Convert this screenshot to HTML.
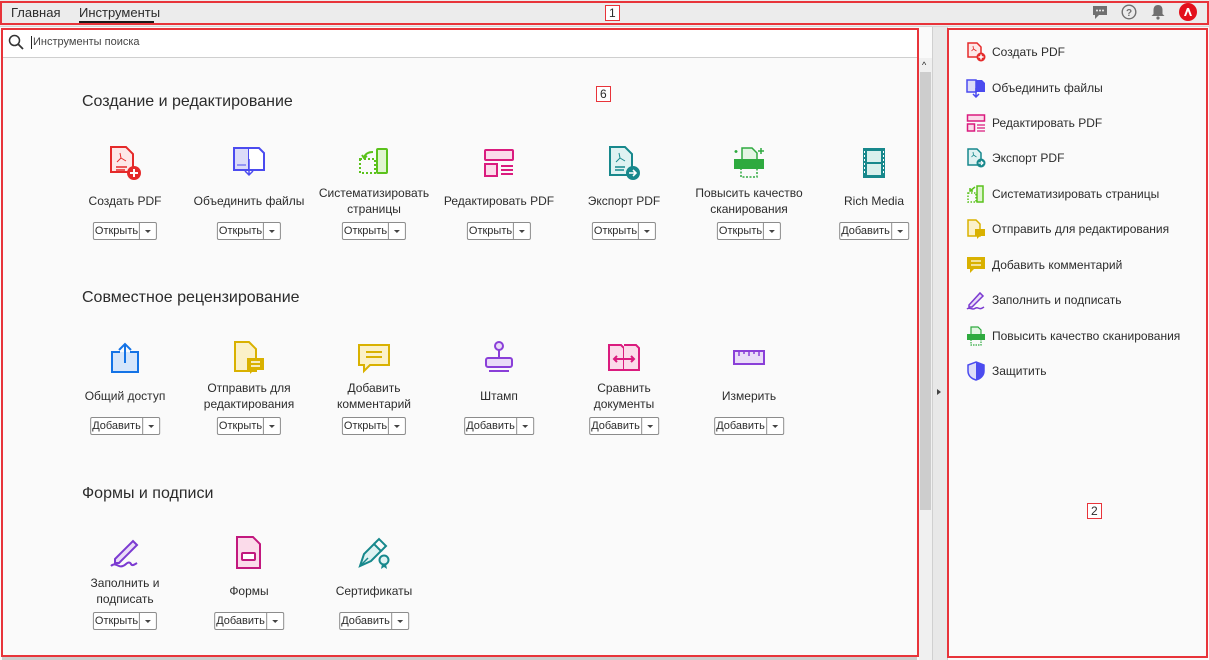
<!DOCTYPE html>
<html><head><meta charset="utf-8"><style>
*{margin:0;padding:0;box-sizing:border-box}
body{width:1209px;height:660px;background:#fafafa;font-family:"Liberation Sans","Noto Sans CJK SC",sans-serif;color:#2c2c2c;position:relative;overflow:hidden}
.abs{position:absolute}
.top{left:0;top:0;width:1209px;height:27px;background:#ececec;border-bottom:1px solid #d6d6d6}
.redbox{position:absolute;border:2px solid #e8343a}
.tab{position:absolute;top:5px;font-size:13px;color:#2c2c2c}
.h{position:absolute;left:82px;font-size:16px;color:#2c2c2c}
.t{position:absolute;width:124px;height:100px}
.t svg{position:absolute;left:44px;top:0}
.t .l{position:absolute;top:39px;left:6px;width:112px;height:34px;display:flex;align-items:center;justify-content:center;text-align:center;font-size:12px;line-height:16px}
.t .b{position:absolute;top:77px;left:50%;transform:translateX(-50%);display:flex;height:18px;border:1px solid #8c8c8c;border-radius:2px;background:#fff;font-size:11px;line-height:16px}
.b span{padding:0 1px}
.b i{width:17px;border-left:1px solid #8c8c8c;position:relative}
.b i:after{content:"";position:absolute;left:5px;top:7px;border:3px solid transparent;border-top:3px solid #444;border-bottom:0}
.r{position:absolute;left:966px;height:20px;font-size:12px;display:flex;align-items:center}
.r svg{margin-right:6px}
.lab{position:absolute;border:1px solid #e8343a;background:#fff;font-size:12px;padding:0 3px;line-height:14px}
</style></head><body>
<div class="abs top"></div>
<div class="tab" style="left:11px">Главная</div>
<div class="tab" style="left:79px">Инструменты</div>
<div class="abs" style="left:79px;top:21px;width:75px;height:2px;background:#1a1a1a"></div>
<svg class="abs" style="left:1092px;top:5px" width="16" height="15" viewBox="0 0 16 15"><path d="M1 1h14v9H7l-4 4v-4H1z" fill="#707070"/><circle cx="5" cy="5.5" r="1" fill="#ececec"/><circle cx="8" cy="5.5" r="1" fill="#ececec"/><circle cx="11" cy="5.5" r="1" fill="#ececec"/></svg>
<svg class="abs" style="left:1121px;top:4px" width="16" height="16" viewBox="0 0 16 16"><circle cx="8" cy="8" r="6.8" fill="none" stroke="#707070" stroke-width="1.4"/><text x="8" y="12" font-size="10" text-anchor="middle" fill="#707070" font-family="Liberation Sans" font-weight="bold">?</text></svg>
<svg class="abs" style="left:1151px;top:4px" width="14" height="16" viewBox="0 0 14 16"><path d="M7 1c3 0 4.5 2 4.5 5v4l2 2H.5l2-2V6C2.5 3 4 1 7 1z" fill="#707070"/><circle cx="7" cy="14" r="1.6" fill="#707070"/></svg>
<svg class="abs" style="left:1179px;top:3px" width="18" height="18" viewBox="0 0 18 18"><circle cx="9" cy="9" r="9" fill="#e3101b"/><path d="M5 13L8 5h2l3 8h-2l-2-5-2 5z" fill="#fff"/></svg>
<div class="redbox" style="left:0;top:1px;width:1209px;height:24px"></div>
<div class="lab" style="left:605px;top:5px">1</div>

<div class="abs" style="left:2px;top:28px;width:916px;height:30px;background:#fff;border-bottom:1px solid #cfcfcf"></div>
<svg class="abs" style="left:8px;top:34px" width="16" height="16" viewBox="0 0 16 16"><circle cx="6.5" cy="6.5" r="5" fill="none" stroke="#333" stroke-width="1.5"/><path d="M10 10l5 5" stroke="#333" stroke-width="1.8"/></svg>
<div class="abs" style="left:31px;top:36px;width:1px;height:13px;background:#222"></div>
<div class="abs" style="left:33px;top:36px;font-size:11px;color:#444">Инструменты поиска</div>
<div class="abs" style="left:919px;top:58px;width:13px;height:602px;background:#f0f0f0"></div>
<div class="abs" style="left:920px;top:72px;width:11px;height:438px;background:#cdcdcd"></div>
<div class="abs" style="left:922px;top:60px;font-size:9px;color:#222">^</div>
<div class="abs" style="left:932px;top:27px;width:16px;height:633px;background:#e8e8e8;border-left:1px solid #d0d0d0;border-right:1px solid #d0d0d0"></div>
<div class="abs" style="left:937px;top:389px;border:3px solid transparent;border-left:4px solid #444"></div>
<div class="abs" style="left:2px;top:657px;width:915px;height:3px;background:#ccc"></div>

<div class="h" style="top:93px">Создание и редактирование</div>
<div class="h" style="top:289px">Совместное рецензирование</div>
<div class="h" style="top:485px">Формы и подписи</div>
<div class="lab" style="left:596px;top:86px">6</div>

<div class="t" style="left:63px;top:145px"><svg width="36" height="36" viewBox="0 0 36 36"><path d="M4 2h15l7 7v18H4z" fill="#fde8e8" stroke="#e52a2a" stroke-width="2"/><path d="M9 22h11M9 25h9" stroke="#e52a2a" stroke-width="1.5"/><path d="M13 8l1 5-4 4M14 13l5 3" stroke="#e52a2a" fill="none"/><circle cx="27" cy="28" r="7" fill="#e52a2a"/><path d="M27 24v8M23 28h8" stroke="#fff" stroke-width="2"/></svg><div class="l">Создать PDF</div><div class="b"><span>Открыть</span><i></i></div></div>
<div class="t" style="left:187px;top:145px"><svg width="36" height="36" viewBox="0 0 36 36"><rect x="3" y="3" width="15" height="22" fill="#dcdcf8" stroke="#4b4bef" stroke-width="2"/><path d="M18 3h10l5 5v17H18" fill="#fff" stroke="#4b4bef" stroke-width="2"/><path d="M18 14v16M14 26l4 4 4-4" stroke="#4b4bef" stroke-width="1.5" fill="none"/><path d="M6 20h9" stroke="#4b4bef"/></svg><div class="l">Объединить файлы</div><div class="b"><span>Открыть</span><i></i></div></div>
<div class="t" style="left:312px;top:145px"><svg width="36" height="36" viewBox="0 0 36 36"><rect x="21" y="4" width="10" height="24" rx="1" fill="#e0f5d0" stroke="#5bc21c" stroke-width="2"/><rect x="4" y="14" width="15" height="14" fill="none" stroke="#5bc21c" stroke-width="2" stroke-dasharray="2 2"/><path d="M17 7c-5 0-8 2-9 6M6 10l2 3 3-2" stroke="#5bc21c" stroke-width="2" fill="none"/></svg><div class="l">Систематизировать страницы</div><div class="b"><span>Открыть</span><i></i></div></div>
<div class="t" style="left:437px;top:145px"><svg width="36" height="36" viewBox="0 0 36 36"><rect x="4" y="5" width="28" height="10" rx="1" fill="#fbdbea" stroke="#da1b7e" stroke-width="2"/><rect x="4" y="19" width="12" height="12" fill="#fbdbea" stroke="#da1b7e" stroke-width="2"/><path d="M20 21h12M20 25h12M20 29h12" stroke="#da1b7e" stroke-width="2"/></svg><div class="l">Редактировать PDF</div><div class="b"><span>Открыть</span><i></i></div></div>
<div class="t" style="left:562px;top:145px"><svg width="36" height="36" viewBox="0 0 36 36"><path d="M4 2h15l7 7v21H4z" fill="#dff2f2" stroke="#17888c" stroke-width="2"/><path d="M9 22h10M9 25h9" stroke="#17888c" stroke-width="1.5"/><path d="M13 8l1 5-4 4M14 13l5 3" stroke="#17888c" fill="none"/><circle cx="27" cy="28" r="7" fill="#17888c"/><path d="M23 28h7M27 25l3 3-3 3" stroke="#fff" stroke-width="1.6" fill="none"/></svg><div class="l">Экспорт PDF</div><div class="b"><span>Открыть</span><i></i></div></div>
<div class="t" style="left:687px;top:145px"><svg width="36" height="36" viewBox="0 0 36 36"><path d="M11 3h10l5 5v10H11z" fill="#e3f5e3" stroke="#2eaa3f" stroke-width="1.5"/><rect x="3" y="14" width="30" height="10" fill="#2eaa3f"/><rect x="10" y="22" width="16" height="10" fill="none" stroke="#2eaa3f" stroke-width="1.5" stroke-dasharray="2 1.5"/><path d="M30 3v6M27 6h6M5 5v3M3.5 6.5h3" stroke="#2eaa3f" stroke-width="1.5"/></svg><div class="l">Повысить качество сканирования</div><div class="b"><span>Открыть</span><i></i></div></div>
<div class="t" style="left:812px;top:145px"><svg width="36" height="36" viewBox="0 0 36 36"><rect x="7" y="3" width="22" height="30" fill="#17888c"/><rect x="11" y="6" width="14" height="11" fill="#d9f0ed"/><rect x="11" y="19" width="14" height="11" fill="#d9f0ed"/><path d="M8.5 6v24M27.5 6v24" stroke="#fff" stroke-dasharray="2 2"/></svg><div class="l">Rich Media</div><div class="b"><span>Добавить</span><i></i></div></div>

<div class="t" style="left:63px;top:340px"><svg width="36" height="36" viewBox="0 0 36 36"><path d="M13 12H5v20h26V12h-8" fill="#d6e6fb" stroke="#1473e6" stroke-width="2"/><path d="M18 23V4M12 10l6-6 6 6" stroke="#1473e6" stroke-width="2" fill="none"/></svg><div class="l">Общий доступ</div><div class="b"><span>Добавить</span><i></i></div></div>
<div class="t" style="left:187px;top:340px"><svg width="36" height="36" viewBox="0 0 36 36"><path d="M4 2h14l7 7v22H4z" fill="#fbf1c8" stroke="#d9b100" stroke-width="2"/><rect x="16" y="18" width="17" height="12" fill="#d9b100"/><path d="M19 30v4l4-4" fill="#d9b100"/><path d="M20 22h9M20 26h9" stroke="#fff" stroke-width="1.5"/></svg><div class="l">Отправить для редактирования</div><div class="b"><span>Открыть</span><i></i></div></div>
<div class="t" style="left:312px;top:340px"><svg width="36" height="36" viewBox="0 0 36 36"><path d="M3 5h30v20H14l-6 6v-6H3z" fill="#fbf1c8" stroke="#d9b100" stroke-width="2"/><path d="M10 12h16M10 17h16" stroke="#d9b100" stroke-width="2"/></svg><div class="l">Добавить<br>комментарий</div><div class="b"><span>Открыть</span><i></i></div></div>
<div class="t" style="left:437px;top:340px"><svg width="36" height="36" viewBox="0 0 36 36"><circle cx="18" cy="6" r="4" fill="#eadcf8" stroke="#8a3fd8" stroke-width="2"/><path d="M18 10v8" stroke="#8a3fd8" stroke-width="2"/><rect x="5" y="18" width="26" height="9" rx="2" fill="#eadcf8" stroke="#8a3fd8" stroke-width="2"/><path d="M8 31h20" stroke="#8a3fd8" stroke-width="2"/></svg><div class="l">Штамп</div><div class="b"><span>Добавить</span><i></i></div></div>
<div class="t" style="left:562px;top:340px"><svg width="36" height="36" viewBox="0 0 36 36"><path d="M3 5h12l3 3v22H3z" fill="#fbdbea" stroke="#da1b7e" stroke-width="2"/><path d="M18 5h12l3 3v22H18" fill="#fbdbea" stroke="#da1b7e" stroke-width="2"/><path d="M8 19h20M11 16l-3 3 3 3M25 16l3 3-3 3" stroke="#da1b7e" stroke-width="2" fill="none"/></svg><div class="l">Сравнить<br>документы</div><div class="b"><span>Добавить</span><i></i></div></div>
<div class="t" style="left:687px;top:340px"><svg width="36" height="36" viewBox="0 0 36 36"><rect x="3" y="11" width="30" height="13" fill="#eadcf8" stroke="#8a3fd8" stroke-width="2"/><path d="M8 11v5M13 11v3M18 11v5M23 11v3M28 11v5" stroke="#8a3fd8" stroke-width="1.5"/></svg><div class="l">Измерить</div><div class="b"><span>Добавить</span><i></i></div></div>

<div class="t" style="left:63px;top:535px"><svg width="36" height="36" viewBox="0 0 36 36"><path d="M8 24L26 6l4 4-18 18H8z" fill="#eadcf8" stroke="#7b3ad1" stroke-width="2"/><path d="M4 31c3-3 6-1 8 0s5 0 7-2 4-2 5 0 3 1 6-1" stroke="#7b3ad1" stroke-width="2" fill="none"/></svg><div class="l">Заполнить и<br>подписать</div><div class="b"><span>Открыть</span><i></i></div></div>
<div class="t" style="left:187px;top:535px"><svg width="36" height="36" viewBox="0 0 36 36"><path d="M6 2h16l7 7v24H6z" fill="#fbdbea" stroke="#c2187e" stroke-width="2"/><rect x="11" y="18" width="13" height="7" rx="1" fill="#fff" stroke="#c2187e" stroke-width="2"/></svg><div class="l">Формы</div><div class="b"><span>Добавить</span><i></i></div></div>
<div class="t" style="left:312px;top:535px"><svg width="36" height="36" viewBox="0 0 36 36"><path d="M4 31l4-12 10-10 7 7-10 10z" fill="#dff2f2" stroke="#17888c" stroke-width="2"/><path d="M4 31l8-8" stroke="#17888c" stroke-width="1.5"/><path d="M18 9l5-5 7 7-5 5" fill="none" stroke="#17888c" stroke-width="2"/><circle cx="28" cy="25" r="4.5" fill="#dff2f2" stroke="#17888c" stroke-width="2"/><path d="M26 29l-1 5 3-2 3 2-1-5" fill="#17888c"/></svg><div class="l">Сертификаты</div><div class="b"><span>Добавить</span><i></i></div></div>

<div class="redbox" style="left:1px;top:28px;width:918px;height:629px"></div>

<div class="r" style="top:42px"><svg width="20" height="20" viewBox="0 0 20 20"><path d="M2 1h9l4 4v10H2z" fill="#fde8e8" stroke="#e52a2a" stroke-width="1.5"/><path d="M7 4l.5 3-2 2M7.5 7l3 2" stroke="#e52a2a" fill="none" stroke-width=".8"/><circle cx="15" cy="15" r="4.5" fill="#e52a2a"/><path d="M15 12.5v5M12.5 15h5" stroke="#fff" stroke-width="1.5"/></svg>Создать PDF</div>
<div class="r" style="top:78px"><svg width="20" height="20" viewBox="0 0 20 20"><rect x="1" y="2" width="9" height="12" fill="#dcdcf8" stroke="#4b4bef" stroke-width="1.5"/><path d="M10 2h6l3 3v9h-9" fill="#4b4bef"/><path d="M10 10v9M7 16l3 3 3-3" stroke="#4b4bef" stroke-width="1.5" fill="none"/></svg>Объединить файлы</div>
<div class="r" style="top:113px"><svg width="20" height="20" viewBox="0 0 20 20"><rect x="1.5" y="2" width="17" height="6" fill="#fbdbea" stroke="#da1b7e" stroke-width="1.5"/><rect x="1.5" y="11" width="7" height="7" fill="#fbdbea" stroke="#da1b7e" stroke-width="1.5"/><path d="M11 12h8M11 15h8M11 18h8" stroke="#da1b7e" stroke-width="1.3"/></svg>Редактировать PDF</div>
<div class="r" style="top:148px"><svg width="20" height="20" viewBox="0 0 20 20"><path d="M2 1h9l4 4v12H2z" fill="#dff2f2" stroke="#17888c" stroke-width="1.5"/><path d="M7 4l.5 3-2 2M7.5 7l3 2" stroke="#17888c" fill="none" stroke-width=".8"/><circle cx="15" cy="15" r="4.5" fill="#17888c"/><path d="M12.5 15h4.5M15 13l2 2-2 2" stroke="#fff" stroke-width="1.2" fill="none"/></svg>Экспорт PDF</div>
<div class="r" style="top:184px"><svg width="20" height="20" viewBox="0 0 20 20"><rect x="11" y="2" width="6" height="16" fill="#e0f5d0" stroke="#5bc21c" stroke-width="1.5"/><rect x="2" y="9" width="8" height="9" fill="none" stroke="#5bc21c" stroke-width="1.5" stroke-dasharray="1.5 1.5"/><path d="M9 3L4 7M4 4v3h3" stroke="#5bc21c" stroke-width="1.5" fill="none"/></svg>Систематизировать страницы</div>
<div class="r" style="top:219px"><svg width="20" height="20" viewBox="0 0 20 20"><path d="M2 1h8l4 4v12H2z" fill="#fbf1c8" stroke="#d9b100" stroke-width="1.5"/><rect x="9" y="10" width="10" height="7" fill="#d9b100"/><path d="M11 17v3l3-3" fill="#d9b100"/></svg>Отправить для редактирования</div>
<div class="r" style="top:255px"><svg width="20" height="20" viewBox="0 0 20 20"><path d="M1 2h18v12H8l-4 4v-4H1z" fill="#d9b100"/><path d="M5 6h10M5 10h10" stroke="#fbf1c8" stroke-width="1.5"/></svg>Добавить комментарий</div>
<div class="r" style="top:290px"><svg width="20" height="20" viewBox="0 0 20 20"><path d="M3 15L14 3l3 3L6 17H3z" fill="#eadcf8" stroke="#7b3ad1" stroke-width="1.5"/><path d="M1 19c2-2 4 0 6 0s3-2 5-1 3 1 6-1" stroke="#7b3ad1" stroke-width="1.5" fill="none"/></svg>Заполнить и подписать</div>
<div class="r" style="top:326px"><svg width="20" height="20" viewBox="0 0 20 20"><path d="M5 1h7l3 3v5H5z" fill="#e3f5e3" stroke="#2eaa3f" stroke-width="1.2"/><rect x="1" y="8" width="18" height="6" fill="#2eaa3f"/><rect x="5" y="13" width="10" height="6" fill="none" stroke="#2eaa3f" stroke-width="1.2" stroke-dasharray="1.5 1"/></svg>Повысить качество сканирования</div>
<div class="r" style="top:361px"><svg width="20" height="20" viewBox="0 0 20 20"><path d="M10 1l8 3v6c0 5-4 8-8 9-4-1-8-4-8-9V4z" fill="#dcdcf8" stroke="#4b4bef" stroke-width="1.5"/><path d="M10 1v18c4-1 8-4 8-9V4z" fill="#4b4bef"/></svg>Защитить</div>
<div class="lab" style="left:1087px;top:503px">2</div>
<div class="redbox" style="left:947px;top:28px;width:261px;height:630px"></div>
</body></html>
